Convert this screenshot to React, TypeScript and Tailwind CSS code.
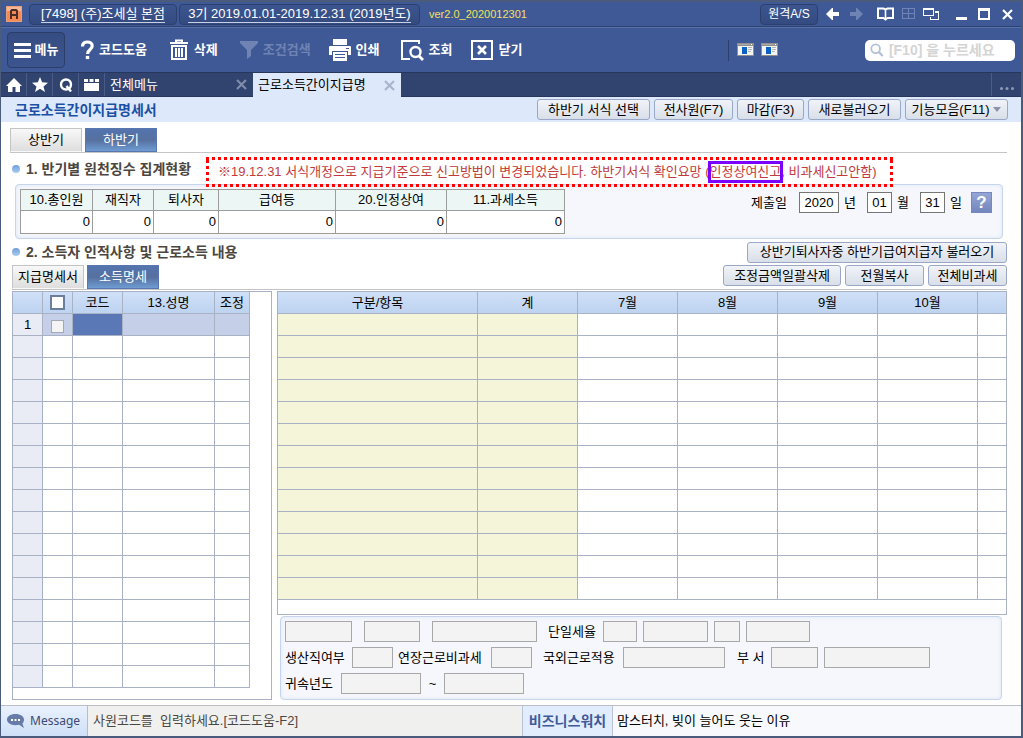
import type { ReactNode } from "react";

const MONTHS = ["7월", "8월", "9월", "10월"];

const SUMMARY = [
  { label: "10.총인원", width: "w-[72px]" },
  { label: "재직자", width: "w-[61px]" },
  { label: "퇴사자", width: "w-[65px]" },
  { label: "급여등", width: "w-[117px]" },
  { label: "20.인정상여", width: "w-[111px]" },
  { label: "11.과세소득", width: "w-[118px]" },
];

const line = "border-[#a9b1c4]";
const headFill = "bg-linear-to-b from-[#d0e0f8] to-[#bdd3f0]";

function ActionButton({ children, className = "" }: { children: ReactNode; className?: string }) {
  return (
    <button
      type="button"
      className={`flex h-[21px] shrink-0 items-center justify-center rounded-[3px] border border-[#9aa7c6] bg-linear-to-b from-[#f1f3f8] to-[#d9dfe9] whitespace-nowrap ${className}`}
    >
      {children}
    </button>
  );
}

function PageTab({ children, active = false }: { children: ReactNode; active?: boolean }) {
  return (
    <button
      type="button"
      className={`flex h-6 w-18 items-center justify-center border whitespace-nowrap ${
        active
          ? "border-[#5a76b0] bg-linear-to-b from-[#5474ae] via-[#56709f] to-[#6f9cd2] text-white"
          : "border-[#c4c4c4] border-b-transparent bg-linear-to-b from-[#f8f8f8] to-[#dedede]"
      }`}
    >
      {children}
    </button>
  );
}

function SectionTitle({ children, className = "" }: { children: ReactNode; className?: string }) {
  return (
    <h2 className={`flex shrink-0 items-center gap-[6px] text-[14px] font-bold whitespace-nowrap text-[#4c4640] ${className}`}>
      <span className="size-2 rounded-full bg-linear-to-b from-[#6f9fd8] to-[#a9cdf0]" />
      {children}
    </h2>
  );
}

function Tool({ icon, label, className = "" }: { icon: ReactNode; label: string; className?: string }) {
  return (
    <button type="button" className={`flex items-center gap-[5px] font-bold whitespace-nowrap ${className}`}>
      {icon}
      {label}
    </button>
  );
}

function Box({ label, className }: { label: string; className: string }) {
  return (
    <input
      aria-label={label}
      readOnly
      className={`h-[21px] shrink-0 border border-[#a8a8a8] bg-[#f3f3f3] px-1 ${className}`}
    />
  );
}

function FieldLabel({ children, className }: { children: ReactNode; className: string }) {
  return <span className={`shrink-0 whitespace-nowrap ${className}`}>{children}</span>;
}

function WindowThumb() {
  return (
    <svg width="18" height="14" viewBox="0 0 18 14" shapeRendering="crispEdges">
      <path d="M0 0h17v13H0z" fill="#8f8f8f" />
      <path d="M1 3h15v9H1z" fill="#f4f4f4" />
      <path d="M5 4h5v7H5z" fill="#0a62c4" />
      <path d="M11 4h4v1h-4zM11 6h4v1h-4zM11 8h3v1h-3z" fill="#b5b5b5" />
      <path d="M1 1h12v1H1z" fill="#a8a8a8" />
      <path d="M14 1h1v1h-1z" fill="#fff" />
    </svg>
  );
}

function CloseX({ color }: { color: string }) {
  return (
    <svg width="11" height="11" viewBox="0 0 11 11" stroke={color} strokeWidth="2.200">
      <path d="M1 1l9 9M10 1l-9 9" />
    </svg>
  );
}

function TitleBar() {
  const chip =
    "flex h-[21px] items-center justify-center rounded-[4px] border border-[#2c406f] bg-linear-to-b from-[#3c5590] to-[#344b80] whitespace-nowrap";
  return (
    <header className="flex h-[25px] items-center border-b border-[#2f4373] bg-[#3f5996] pl-[5px] text-white">
      <svg width="16" height="16" viewBox="0 0 16 16">
        <path d="M0 0h16v16H0z" fill="#e9a07a" />
        <path d="M1 1h14v14H1z" fill="#f58a55" />
        <path d="M1 1h14v4H1z" fill="#f8b692" />
        <path d="M5 13V5l1-1h4l1 1v8M5 9h6" fill="none" stroke="#4b2d26" strokeWidth="2" />
      </svg>
      <button type="button" className={`${chip} ml-[7px] w-[148px]`}>
        <span className="border-b border-[#c7d0e4] leading-4">[7498] (주)조세실 본점</span>
      </button>
      <button type="button" className={`${chip} ml-[2px] w-[241px]`}>
        <span className="border-b border-[#c7d0e4] leading-4">3기 2019.01.01-2019.12.31 (2019년도)</span>
      </button>
      <span className="ml-[9px] text-[11px] text-[#f3e15c]">ver2.0_2020012301</span>
      <div className="ml-auto flex items-center pr-[8px]">
        <button type="button" className={`${chip} w-[58px] text-[12px]`}>원격A/S</button>
        <button type="button" aria-label="뒤로" className="ml-[8px]">
          <svg width="14" height="14" viewBox="0 0 14 14" fill="#fff"><path d="M0 7l6-6h1v4h6v4H7v4H6z" /></svg>
        </button>
        <button type="button" aria-label="앞으로" className="ml-[9px]">
          <svg width="14" height="14" viewBox="0 0 14 14" fill="#6f84b5"><path d="M14 7L8 1H7v4H1v4h6v4h1z" /></svg>
        </button>
        <button type="button" aria-label="도움말 책" className="ml-[14px]">
          <svg width="17" height="14" viewBox="0 0 17 14" fill="none" stroke="#fff" strokeWidth="2">
            <path d="M1 1.500h5.500l2 1 2-1H16V11h-5.500l-2 1.500-2-1.500H1z" />
            <path d="M8.500 2v11" strokeWidth="1.600" />
          </svg>
        </button>
        <button type="button" aria-label="격자" className="ml-[8px]">
          <svg width="14" height="14" viewBox="0 0 14 14" fill="none" stroke="#6f84b5" shapeRendering="crispEdges">
            <path d="M.5 1.500h12v10H.5z M6.500 1v10 M0 6.500h13" />
          </svg>
        </button>
        <button type="button" aria-label="창 전환" className="ml-[7px]">
          <svg width="17" height="14" viewBox="0 0 17 14" shapeRendering="crispEdges">
            <path d="M0 1h11v8H0zM1 3v5h9V3z" fill="#fff" fillRule="evenodd" />
            <path d="M12 4h4v9H7v-3h1v2h7V6h-3z" fill="#fff" />
          </svg>
        </button>
        <button type="button" aria-label="최소화" className="ml-[16px]">
          <svg width="11" height="12" viewBox="0 0 11 12"><path d="M0 9h11v3H0z" fill="#fff" /></svg>
        </button>
        <button type="button" aria-label="최대화" className="ml-[11px]">
          <svg width="12" height="12" viewBox="0 0 12 12" shapeRendering="crispEdges">
            <path d="M0 0h12v12H0zM2 3v7h8V3z" fill="#fff" fillRule="evenodd" />
          </svg>
        </button>
        <button type="button" aria-label="창 닫기" className="ml-[12px]">
          <CloseX color="#fff" />
        </button>
      </div>
    </header>
  );
}

function Toolbar() {
  return (
    <nav className="flex h-[45px] items-center border-t border-[#5870a8] bg-[#3f5996] pl-[6px] text-white">
      <button
        type="button"
        className="flex h-[36px] w-[58px] items-center justify-center gap-[4px] rounded-[4px] border border-[#2b3d6b] bg-linear-to-b from-[#364d82] to-[#3c558f] font-bold whitespace-nowrap"
      >
        <svg width="17" height="17" viewBox="0 0 17 17" fill="#fff"><path d="M0 1h17v3H0zM0 7h17v3H0zM0 13h17v3H0z" /></svg>
        메뉴
      </button>
      <Tool
        className="ml-[16px]"
        label="코드도움"
        icon={
          <svg width="13" height="20" viewBox="0 0 13 20" fill="none" stroke="#fff" strokeWidth="3.200">
            <path d="M1.500 6.500C1.500 3.500 3.500 2 6.300 2s4.900 1.600 4.900 4c0 3.600-4.600 3.500-4.600 8" />
            <path d="M4.800 17.500h3.400" />
          </svg>
        }
      />
      <Tool
        className="ml-[23px]"
        label="삭제"
        icon={
          <svg width="19" height="22" viewBox="0 0 19 22" fill="none" stroke="#fff" strokeWidth="2">
            <path d="M0 4h18M6 4V1.500h6V4M2 7h14v13H2zM6 9v9M9 9v9M12 9v9" />
          </svg>
        }
      />
      <Tool
        className="ml-[22px] text-[#6f84b3]"
        label="조건검색"
        icon={<svg width="18" height="18" viewBox="0 0 18 18" fill="#6f84b3"><path d="M0 0h18v2l-7 7v6l-4 3V9L0 2z" /></svg>}
      />
      <Tool
        className="ml-[18px]"
        label="인쇄"
        icon={
          <svg width="22" height="22" viewBox="0 0 22 22" fill="#fff">
            <path d="M4 0h14v6H4zM1 7h20q1 0 1 1v8h-3v-4H3v4H0V8q0-1 1-1z" />
            <path d="M4 13h14v9H4z" />
            <path d="M6 15.500h10M6 18.500h10M17 9.500h3" stroke="#3f5996" />
          </svg>
        }
      />
      <Tool
        className="ml-[21px]"
        label="조회"
        icon={
          <svg width="23" height="21" viewBox="0 0 23 21" fill="none" stroke="#fff" strokeWidth="2">
            <path d="M18 4V1H1v18h8" />
            <circle cx="14.500" cy="12" r="5" strokeWidth="2.400" />
            <path d="M18 16l4 4" strokeWidth="2.800" />
          </svg>
        }
      />
      <Tool
        className="ml-[19px]"
        label="닫기"
        icon={
          <svg width="22" height="20" viewBox="0 0 22 20" fill="none" stroke="#fff" strokeWidth="2">
            <path d="M1 1h20v18H1z" />
            <path d="M7 6l8 8M15 6l-8 8" strokeWidth="2.600" />
          </svg>
        }
      />
      <div className="ml-auto flex items-center pr-[6px]">
        <div className="flex h-[21px] items-center gap-[6px] border-l border-[#2c406f] pl-[8px]">
          <WindowThumb />
          <WindowThumb />
        </div>
        <label className="ml-[86px] flex h-[21px] w-[150px] items-center gap-[5px] rounded-[5px] bg-white pl-[5px]">
          <svg width="16" height="16" viewBox="0 0 16 16" fill="none" stroke="#b3bfd9" strokeWidth="2">
            <circle cx="6.500" cy="6.500" r="5" />
            <path d="M10.500 10.500l4 4.500" strokeWidth="2.500" />
          </svg>
          <input
            aria-label="검색"
            placeholder="[F10] 을 누르세요"
            className="w-full min-w-0 bg-transparent text-[14px] font-bold outline-none placeholder:text-[#d4d4d4]"
          />
        </label>
      </div>
    </nav>
  );
}

function TabStrip() {
  const cell = "flex w-[26px] items-center justify-center border-r border-[#4a5c88]";
  return (
    <div className="flex h-[25px] border-y border-[#27365c] bg-[#31446f] text-white">
      <button type="button" aria-label="홈" className={cell}>
        <svg width="16" height="14" viewBox="0 0 16 14" fill="#fff"><path d="M8 0l8 8h-2v6H9.500V9h-3v5H2V8H0z" /></svg>
      </button>
      <button type="button" aria-label="즐겨찾기" className={cell}>
        <svg width="16" height="15" viewBox="0 0 16 15" fill="#fff"><path d="M8 0l2.100 5.300 5.900.4-4.500 3.700L13 15l-5-3.200L3 15l1.500-5.600L0 5.700l5.900-.4z" /></svg>
      </button>
      <button type="button" aria-label="빠른 검색" className={cell}>
        <svg width="14" height="14" viewBox="0 0 14 14" fill="none" stroke="#fff" strokeWidth="2.400">
          <circle cx="7" cy="6.500" r="5" /><path d="M7.500 8l4.500 5.500" />
        </svg>
      </button>
      <button type="button" aria-label="창 목록" className={cell}>
        <svg width="15" height="13" viewBox="0 0 15 13" fill="#fff"><path d="M0 1h4v3H0zM5.500 1h4v3h-4zM11 1h4v3h-4zM0 5h15v8H0z" /></svg>
      </button>
      <div className="flex w-[148px] items-center justify-between pr-[6px] pl-[5px]">
        <button type="button">전체메뉴</button>
        <button type="button" aria-label="전체메뉴 닫기"><CloseX color="#7f8cab" /></button>
      </div>
      <div className="-mb-px flex w-[148px] items-center justify-between bg-[#dde9fb] pr-[6px] pl-[5px] text-black">
        <button type="button">근로소득간이지급명</button>
        <button type="button" aria-label="근로소득간이지급명 닫기"><CloseX color="#a9b5cc" /></button>
      </div>
      <button type="button" aria-label="더보기" className="ml-auto flex w-[30px] items-center justify-center border-l border-[#4a5c88] pt-2">
        <svg width="14" height="3" viewBox="0 0 14 3" fill="#8d99b6">
          <circle cx="1.500" cy="1.500" r="1.500" /><circle cx="7" cy="1.500" r="1.500" /><circle cx="12.500" cy="1.500" r="1.500" />
        </svg>
      </button>
    </div>
  );
}

function Notice() {
  return (
    <p className="relative z-10 flex h-[30px] w-[687px] shrink-0 items-center bg-[repeating-linear-gradient(90deg,#ff0000_0_3px,transparent_3px_6px),repeating-linear-gradient(90deg,#ff0000_0_3px,transparent_3px_6px),repeating-linear-gradient(0deg,#ff0000_0_3px,transparent_3px_6px),repeating-linear-gradient(0deg,#ff0000_0_3px,transparent_3px_6px)] bg-[size:100%_3px,100%_3px,3px_100%,3px_100%] bg-[position:0_0,0_100%,0_0,100%_0] bg-no-repeat pl-[12px] whitespace-pre text-[#c23a3a]">
      ※19.12.31 서식개정으로 지급기준으로 신고방법이 변경되었습니다. 하반기서식 확인요망 (
      <span className="relative">
        인정상여신고
        <span className="absolute -inset-x-[2px] -inset-y-[2px] border-3 border-[#7a00ff]" />
      </span>
      , 비과세신고안함)
    </p>
  );
}

function SummaryPanel() {
  const dateInput = "h-[21px] border border-[#767676] bg-white text-center";
  return (
    <section className="mr-[4px] ml-[3px] flex h-[55px] items-start justify-between rounded-[4px] border border-[#c7d5ec] bg-[#f6f7fc] pt-[4px] pr-[10px] pl-[4px] shadow-[inset_0_0_4px_#dce6f5]">
      <table className="table-fixed border-separate border-spacing-0 border-t border-l border-[#9c9c9c]">
        <thead>
          <tr>
            {SUMMARY.map((c) => (
              <th key={c.label} className={`${c.width} h-[21px] border-r border-b border-[#9c9c9c] bg-[#ebf6f5] p-0 font-normal`}>
                {c.label}
              </th>
            ))}
          </tr>
        </thead>
        <tbody>
          <tr>
            {SUMMARY.map((c) => (
              <td key={c.label} className="h-[23px] border-r border-b border-[#9c9c9c] bg-white p-0 pr-[2px] text-right">
                0
              </td>
            ))}
          </tr>
        </tbody>
      </table>
      <div className="flex items-center pt-[3px]">
        <span>제출일</span>
        <input aria-label="제출 연도" defaultValue="2020" className={`${dateInput} ml-[12px] w-[40px]`} />
        <span className="ml-[5px] w-[23px]">년</span>
        <input aria-label="제출 월" defaultValue="01" className={`${dateInput} w-[25px]`} />
        <span className="ml-[5px] w-[23px]">월</span>
        <input aria-label="제출 일" defaultValue="31" className={`${dateInput} w-[25px]`} />
        <span className="ml-[5px] w-[21px]">일</span>
        <button
          type="button"
          className="flex size-[21px] items-center justify-center border border-[#7688bd] bg-linear-to-b from-[#94a6d4] to-[#7487bd] text-[17px] font-bold text-white"
        >
          ?
        </button>
      </div>
    </section>
  );
}

function EmployeeGrid() {
  const head = `h-[22px] border-r border-b ${line} ${headFill} p-0 font-normal`;
  const cell = `h-[22px] border-r border-b ${line} p-0`;
  return (
    <div className={`w-[260px] shrink-0 border ${line} bg-white`}>
      <table className="w-[237px] table-fixed border-separate border-spacing-0">
        <thead>
          <tr>
            <th className={`${head} w-[30px]`} />
            <th className={`${head} w-[30px]`}>
              <input type="checkbox" aria-label="전체 선택" className="mx-auto block size-[15px] appearance-none border-2 border-[#6d7d9c] bg-white" />
            </th>
            <th className={`${head} w-[50px]`}>코드</th>
            <th className={`${head} w-[92px]`}>13.성명</th>
            <th className={`${head} w-[35px]`}>조정</th>
          </tr>
        </thead>
        <tbody>
          {Array.from({ length: 17 }, (_, i) => (
            <tr key={i} className={i === 0 ? "bg-[#c5d0e8]" : ""}>
              <td className={`${cell} bg-[#e9ecf5] text-center`}>{i === 0 ? "1" : ""}</td>
              <td className={cell}>
                {i === 0 && (
                  <input type="checkbox" aria-label="1행 선택" className="mx-auto mt-[3px] block size-[13px] appearance-none border border-[#a3a8b5] bg-[#f4f4f4]" />
                )}
              </td>
              <td className={`${cell} ${i === 0 ? "bg-[#5b78b6]" : ""}`} />
              <td className={cell} />
              <td className={cell} />
            </tr>
          ))}
        </tbody>
      </table>
    </div>
  );
}

function IncomeGrid() {
  const head = `h-[22px] border-r border-b ${line} ${headFill} p-0 font-normal`;
  const cell = `h-[22px] border-r border-b ${line} p-0`;
  return (
    <div className={`border ${line} bg-white pb-[14px]`}>
      <table className="w-full table-fixed border-separate border-spacing-0">
        <thead>
          <tr>
            <th className={`${head} w-[200px]`}>구분/항목</th>
            <th className={`${head} w-[100px]`}>계</th>
            {MONTHS.map((m) => (
              <th key={m} className={`${head} w-[100px]`}>{m}</th>
            ))}
            <th className={`${head} border-r-0`} />
          </tr>
        </thead>
        <tbody>
          {Array.from({ length: 13 }, (_, i) => (
            <tr key={i}>
              <td className={`${cell} bg-[#f5f5da]`} />
              <td className={`${cell} bg-[#f5f5da]`} />
              {MONTHS.map((m) => (
                <td key={m} className={cell} />
              ))}
              <td className={`${cell} border-r-0`} />
            </tr>
          ))}
        </tbody>
      </table>
    </div>
  );
}

function DetailPanel() {
  return (
    <section className="mt-px mr-[5px] ml-[3px] flex h-[84px] flex-col gap-[5px] rounded-[4px] border border-[#c7d5ec] bg-[#f6f7fc] pt-[4px] pl-[4px] shadow-[inset_0_0_4px_#dce6f5]">
      <div className="flex items-center">
        <Box label="구분 코드" className="w-[67px]" />
        <Box label="구분" className="ml-[12px] w-[56px]" />
        <Box label="구분명" className="ml-[12px] w-[105px]" />
        <FieldLabel className="ml-[11px] w-[55px]">단일세율</FieldLabel>
        <Box label="단일세율" className="w-[34px]" />
        <Box label="단일세율 내용" className="ml-[6px] w-[65px]" />
        <Box label="단일세율 코드" className="ml-[6px] w-[26px]" />
        <Box label="단일세율 비고" className="ml-[6px] w-[64px]" />
      </div>
      <div className="flex items-center">
        <FieldLabel className="w-[67px]">생산직여부</FieldLabel>
        <Box label="생산직여부" className="w-[41px]" />
        <FieldLabel className="ml-[5px] w-[93px]">연장근로비과세</FieldLabel>
        <Box label="연장근로비과세" className="w-[41px]" />
        <FieldLabel className="ml-[11px] w-[80px]">국외근로적용</FieldLabel>
        <Box label="국외근로적용" className="w-[102px]" />
        <FieldLabel className="ml-[12px] w-[34px]">부 서</FieldLabel>
        <Box label="부서 코드" className="w-[47px]" />
        <Box label="부서명" className="ml-[6px] w-[106px]" />
      </div>
      <div className="flex items-center">
        <FieldLabel className="w-[56px]">귀속년도</FieldLabel>
        <Box label="귀속년도 시작" className="w-[80px]" />
        <FieldLabel className="w-[23px] text-center">~</FieldLabel>
        <Box label="귀속년도 종료" className="w-[80px]" />
      </div>
    </section>
  );
}

function StatusBar() {
  return (
    <footer className="mt-auto flex h-[31px] border-t border-[#bcbec6] whitespace-nowrap">
      <div className="flex w-[87px] items-center gap-[5px] border-r border-[#b9bcc5] bg-linear-to-b from-[#e9f1fd] to-[#cfe0f8] pl-[6px] font-['Noto_Sans',sans-serif] text-[12px] text-[#3d4a70]">
        <svg width="18" height="14" viewBox="0 0 18 14" fill="#667ba8">
          <path d="M8.500 0C3.500 0 0 2.400 0 5.600s3.500 5.600 8.500 5.600q2 0 3.600-.4L17 14l-1.600-4.400C16.500 8.500 17 7.200 17 5.600 17 2.400 13.500 0 8.500 0z" />
          <path d="M4 5h2v2H4zM7.500 5h2v2h-2zM11 5h2v2h-2z" fill="#fff" />
        </svg>
        Message
      </div>
      <div className="flex w-[434px] items-center bg-[#f0f0ee] pl-[5px] whitespace-pre text-[#4c4640]">
        사원코드를  입력하세요.[코드도움-F2]
      </div>
      <div className="flex w-[91px] items-center justify-center border-x border-[#b9c3d6] bg-[#e1ecfc] text-[14px] font-bold text-[#3c5a9c]">
        비즈니스워치
      </div>
      <div className="flex flex-1 items-center bg-[#f8f9fd] pl-[4px]">맘스터치, 빚이 늘어도 웃는 이유</div>
    </footer>
  );
}

export default function App() {
  return (
    <div className="flex min-h-screen flex-col border-t-2 border-r-2 border-b-2 border-l border-[#4b5b7c] bg-white font-['Liberation_Sans','Noto_Sans_CJK_KR',sans-serif] text-[13px] leading-[18px] text-black">
      <TitleBar />
      <Toolbar />
      <TabStrip />
      <div className="flex h-[25px] items-center justify-between bg-[#dde9fb] pr-[13px] pl-[14px]">
        <h1 className="text-[14px] font-bold whitespace-nowrap text-[#1c50a5]">근로소득간이지급명세서</h1>
        <div className="flex gap-[4px]">
          <ActionButton className="w-[113px]">하반기 서식 선택</ActionButton>
          <ActionButton className="w-[79px]">전사원(F7)</ActionButton>
          <ActionButton className="w-[67px]">마감(F3)</ActionButton>
          <ActionButton className="w-[93px]">새로불러오기</ActionButton>
          <ActionButton className="w-[103px] gap-[4px]">
            기능모음(F11)
            <svg width="8" height="5" viewBox="0 0 8 5" fill="#8b93a8"><path d="M0 0h8L4 5z" /></svg>
          </ActionButton>
        </div>
      </div>

      <main className="pt-[6px] pr-[14px] pl-[11px]">
        <div className="-ml-[2px] flex gap-[3px] border-b border-[#c4c4c4]">
          <PageTab>상반기</PageTab>
          <PageTab active>하반기</PageTab>
        </div>
        <div className="flex h-[31px] items-center">
          <SectionTitle className="w-[194px]">1. 반기별 원천징수 집계현황</SectionTitle>
          <div className="pt-[6px]">
            <Notice />
          </div>
        </div>
        <SummaryPanel />
        <div className="flex h-[26px] items-center justify-between">
          <SectionTitle>2. 소득자 인적사항 및 근로소득 내용</SectionTitle>
          <ActionButton className="w-[260px]">상반기퇴사자중 하반기급여지급자 불러오기</ActionButton>
        </div>
        <div className="flex items-start justify-between border-b border-[#c4c4c4]">
          <div className="flex gap-[3px]">
            <PageTab>지급명세서</PageTab>
            <PageTab active>소득명세</PageTab>
          </div>
          <div className="flex gap-[4px]">
            <ActionButton className="w-[118px]">조정금액일괄삭제</ActionButton>
            <ActionButton className="w-[79px]">전월복사</ActionButton>
            <ActionButton className="w-[79px]">전체비과세</ActionButton>
          </div>
        </div>
        <div className="mt-px flex gap-[5px]">
          <EmployeeGrid />
          <div className="min-w-0 flex-1">
            <IncomeGrid />
            <DetailPanel />
          </div>
        </div>
      </main>
      <StatusBar />
    </div>
  );
}
